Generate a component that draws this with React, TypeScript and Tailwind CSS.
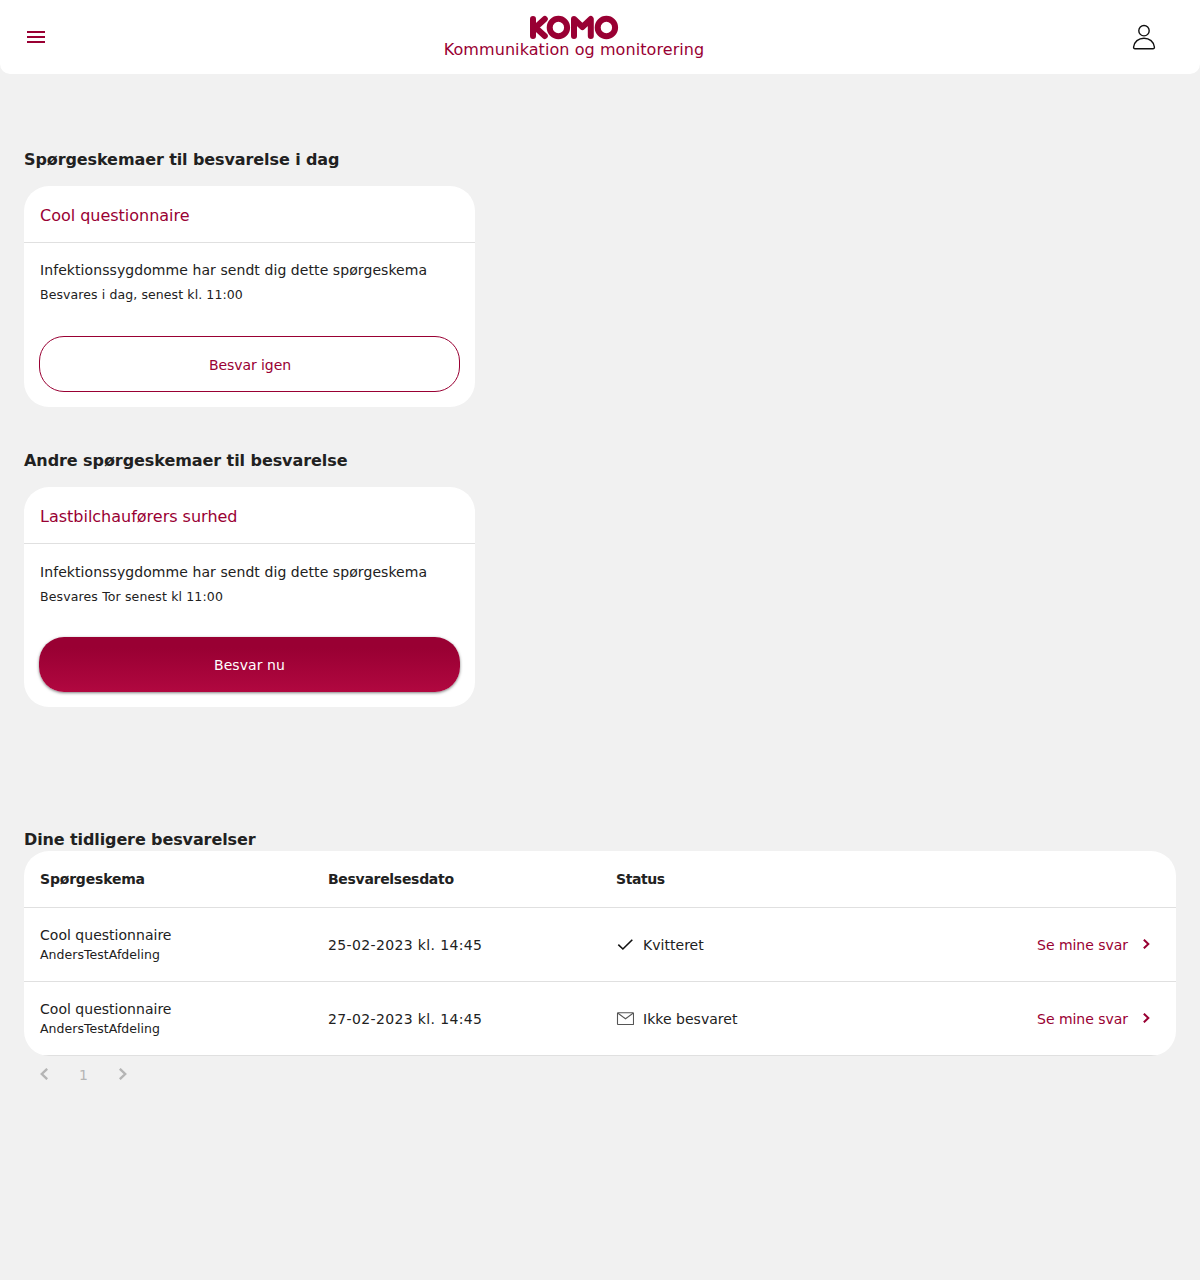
import type { ReactNode } from 'react'

function Logo() {
  return (
    <svg width="90" height="26" viewBox="0 0 90 26" fill="none" stroke="#990033" strokeWidth="6" strokeLinecap="round" strokeLinejoin="round" role="img" aria-label="KOMO">
      <path d="M4 4V21M15.8 4L6.5 12.5L15.8 21" />
      <circle cx="29.4" cy="12.5" r="8.7" />
      <path d="M45 21V4L53.4 12L61.8 4V21" />
      <circle cx="77.4" cy="12.5" r="8.7" />
    </svg>
  )
}

function UserIcon() {
  return (
    <svg width="24" height="26" viewBox="0 0 24 26" fill="none" stroke="#111" strokeWidth="1.4">
      <circle cx="12" cy="6.7" r="5.2" />
      <path d="M3 24.7C2 24.7 1.5 24.1 1.6 23C2.2 17.8 6.5 14.2 12 14.2S21.8 17.8 22.4 23C22.5 24.1 22 24.7 21 24.7Z" />
    </svg>
  )
}

function Chevron({ left = false, className }: { left?: boolean; className: string }) {
  return (
    <svg viewBox="0 0 8 12" className={className} fill="none" stroke="currentColor" strokeWidth="2.4">
      <path d={left ? 'M7.2 0.8L1.8 6L7.2 11.2' : 'M0.8 0.8L6.2 6L0.8 11.2'} />
    </svg>
  )
}

function CheckIcon() {
  return (
    <svg width="18" height="18" viewBox="0 0 18 18" fill="none" stroke="#111" strokeWidth="1.6">
      <path d="M2.3 8.7L6.9 13L16.3 3.7" />
    </svg>
  )
}

function MailIcon() {
  return (
    <svg width="18" height="18" viewBox="0 0 18 18" fill="none" stroke="#555" strokeWidth="1.1">
      <rect x="1.5" y="2.8" width="16" height="11.7" rx="0.5" />
      <path d="M2 3.3L9.5 8.8L17 3.3" />
    </svg>
  )
}

function Card({ title, titleClass, textClass, due, dueClass, children }: { title: string; titleClass: string; textClass: string; due: string; dueClass: string; children: ReactNode }) {
  return (
    <article className="flex w-[451px] flex-col rounded-[25px] bg-white">
      <h3 className="flex h-[57px] items-center border-b border-[#e0e0e0] px-4 pt-1 text-base text-[#990033]">
        <span className={titleClass}>{title}</span>
      </h3>
      <div className={textClass}>
        <p className="text-[14px] leading-5 tracking-[0.075px]">Infektionssygdomme har sendt dig dette spørgeskema</p>
        <p className={dueClass}>{due}</p>
      </div>
      {children}
    </article>
  )
}

const rows = [
  { date: '25-02-2023 kl. 14:45', status: 'Kvitteret', icon: <CheckIcon /> },
  { date: '27-02-2023 kl. 14:45', status: 'Ikke besvaret', icon: <MailIcon /> },
]

export default function App() {
  return (
    <div className="flex min-h-screen flex-col bg-[#f1f1f1] font-['DejaVu_Sans',sans-serif] text-[#212121]">
      <header className="grid h-[74px] grid-cols-[444px_260px_1fr] rounded-b-[10px] bg-white text-[#990033]">
        <button aria-label="Menu" className="ml-[27px] mt-[31px] flex h-3 w-[18px] flex-col justify-between">
          <span className="h-0.5 w-full bg-[#990033]" />
          <span className="h-0.5 w-full bg-[#990033]" />
          <span className="h-0.5 w-full bg-[#990033]" />
        </button>
        <div className="flex flex-col items-center pt-[15px]">
          <Logo />
          <span className="-mt-px whitespace-nowrap text-base leading-5 tracking-[0.075px]">Kommunikation og monitorering</span>
        </div>
        <button aria-label="Profil" className="mr-11 mt-6 h-[26px] justify-self-end">
          <UserIcon />
        </button>
      </header>

      <main className="flex flex-col px-6">
        <h2 className="mt-[74px] text-base font-bold leading-6 tracking-[-0.097px]">Spørgeskemaer til besvarelse i dag</h2>
        <div className="mt-[14px] flex">
          <Card title="Cool questionnaire" titleClass="tracking-[-0.02px]" textClass="px-4 pt-[17px]" due="Besvares i dag, senest kl. 11:00" dueClass="mt-[5px] text-[12.5px] leading-5 tracking-[0.1px]">
            <button className="mx-[15px] mb-[15px] mt-[31px] h-14 rounded-[25px] border border-[#990033] pl-px pt-[3px] text-[14px] tracking-[-0.08px] text-[#990033]">Besvar igen</button>
          </Card>
        </div>

        <h2 className="mt-[42px] text-base font-bold leading-6 tracking-[-0.073px]">Andre spørgeskemaer til besvarelse</h2>
        <div className="mt-[14px] flex">
          <Card title="Lastbilchauførers surhed" titleClass="tracking-[-0.007px]" textClass="px-4 pt-[18px]" due="Besvares Tor senest kl 11:00" dueClass="mt-[5px] text-[12.5px] leading-5 tracking-[0.14px]">
            <button className="mx-[15px] mb-[15px] mt-[30px] h-[55px] rounded-[25px] bg-linear-to-b from-[#990033] from-20% to-[#b10840] pt-0.5 text-[14px] tracking-[0.08px] text-white shadow-[0_1px_3px_rgba(0,0,0,0.5)]">Besvar nu</button>
          </Card>
        </div>

        <h2 className="mt-[121px] text-base font-bold leading-6 tracking-[-0.11px]">Dine tidligere besvarelser</h2>
        <section className="-mt-px overflow-hidden rounded-[25px] bg-white text-[14px] leading-5">
          <div className="grid h-[57px] grid-cols-4 items-center border-b border-[#e0e0e0] font-bold">
            <span className="pl-4 tracking-[-0.19px]">Spørgeskema</span>
            <span className="pl-4 tracking-[-0.3px]">Besvarelsesdato</span>
            <span className="pl-4 tracking-[-0.44px]">Status</span>
            <span />
          </div>
          {rows.map((r) => (
            <div key={r.date} className="grid h-[74px] grid-cols-4 items-center border-b border-[#e0e0e0]">
              <div className="pl-4">
                <p className="tracking-[0.02px]">Cool questionnaire</p>
                <p className="text-[12.5px] leading-5 tracking-[0.04px]">AndersTestAfdeling</p>
              </div>
              <span className="pl-4 tracking-[0.366px]">{r.date}</span>
              <span className="flex items-center gap-[9px] pl-4">
                {r.icon}
                <span className="tracking-[0.03px]">{r.status}</span>
              </span>
              <a className="flex items-center justify-end pr-[26px] tracking-[-0.03px] text-[#990033]">
                Se mine svar
                <Chevron className="mb-0.5 ml-[15px] h-[10px] w-[7px]" />
              </a>
            </div>
          ))}
        </section>
        <nav className="ml-4 mt-2 flex h-5 items-center text-[14px] text-[#b5b5b5]">
          <Chevron left className="h-3 w-2" />
          <span className="ml-[31px] mt-0.5">1</span>
          <Chevron className="ml-[31px] h-3 w-2" />
        </nav>
      </main>
    </div>
  )
}
